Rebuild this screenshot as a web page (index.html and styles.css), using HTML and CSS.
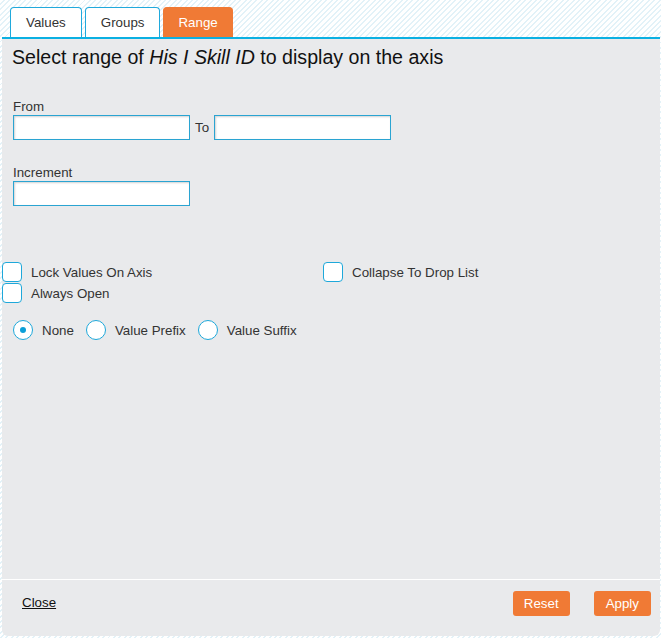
FILE: index.html
```html
<!DOCTYPE html>
<html>
<head>
<meta charset="utf-8">
<link rel="stylesheet" href="styles.css">
</head>
<body>
<div class="widget">
  <div class="tabs">
    <div class="tab">Values</div>
    <div class="tab">Groups</div>
    <div class="tab active">Range</div>
  </div>
  <div class="panel">
    <div class="content">
      <h1 class="title">Select range of <em>His I Skill ID</em> to display on the axis</h1>
      <div class="field from-field">
        <label class="label">From</label>
        <div class="range-row">
          <input class="text-input" type="text">
          <span class="to">To</span>
          <input class="text-input" type="text">
        </div>
      </div>
      <div class="field inc-field">
        <label class="label">Increment</label>
        <input class="text-input" type="text">
      </div>
      <div class="checks">
        <div class="check-col">
          <div class="check"><span class="box"></span><span class="check-text">Lock Values On Axis</span></div>
          <div class="check"><span class="box"></span><span class="check-text">Always Open</span></div>
        </div>
        <div class="check-col">
          <div class="check"><span class="box"></span><span class="check-text">Collapse To Drop List</span></div>
        </div>
      </div>
      <div class="radios">
        <div class="radio"><span class="circle checked"></span><span class="radio-text">None</span></div>
        <div class="radio"><span class="circle"></span><span class="radio-text">Value Prefix</span></div>
        <div class="radio"><span class="circle"></span><span class="radio-text">Value Suffix</span></div>
      </div>
    </div>
    <div class="footer">
      <a class="close-link" href="#">Close</a>
      <button class="btn reset">Reset</button>
      <button class="btn apply">Apply</button>
    </div>
  </div>
</div>
</body>
</html>
```

FILE: styles.css
```css
html, body {
  margin: 0;
  padding: 0;
}
body {
  font-family: "Liberation Sans", Arial, sans-serif;
  font-size: 13.33px;
  color: #333;
  width: 661px;
  height: 638px;
  overflow: hidden;
  background-color: #fff;
  background-image: repeating-linear-gradient(135deg, #fff 0px, #fff 2.4px, #e3f2f8 2.4px, #e3f2f8 3.8px);
}
.widget {
  padding-left: 2px;
  padding-right: 1px;
  display: flex;
  flex-direction: column;
}
.tabs {
  display: flex;
  gap: 3px;
  padding: 7px 0 0 8px;
  height: 30px;
}
.tab {
  box-sizing: border-box;
  height: 30px;
  line-height: 29px;
  padding: 0 15px;
  border: 1px solid #20a9dc;
  border-bottom: none;
  border-radius: 4px 4px 0 0;
  background: #fff;
  color: #333;
}
.tab.active {
  padding: 0 14px;
  background: #f07a35;
  border-color: #f07a35;
  color: #fff;
}
.panel {
  box-sizing: border-box;
  height: 599px;
  background: #e9eaec;
  border-top: 2px solid #0bb0e2;
  border-radius: 0 0 6px 6px;
  display: flex;
  flex-direction: column;
}
.content {
  flex: 1;
}
.title {
  margin: 0;
  padding: 6px 0 0 10px;
  font-size: 19.6px;
  line-height: 24px;
  font-weight: normal;
  color: #111;
}
.title em {
  font-style: italic;
}
.field {
  display: flex;
  flex-direction: column;
  align-items: flex-start;
  padding-left: 11px;
}
.from-field {
  margin-top: 30px;
}
.inc-field {
  margin-top: 25px;
}
.label {
  line-height: 15px;
  margin-bottom: 1px;
  color: #333;
}
.range-row {
  display: flex;
  align-items: center;
}
.to {
  margin: 0 5px 0 5px;
  color: #333;
}
.text-input {
  box-sizing: border-box;
  width: 177px;
  height: 25px;
  margin: 0;
  border: 1px solid #2aa4d2;
  background: #fff;
  box-shadow: inset 1px 1px 2px rgba(0, 0, 0, 0.18);
  padding: 0 4px;
  font-family: inherit;
  font-size: 13px;
  outline: none;
}
.checks {
  display: grid;
  grid-template-columns: 321px auto;
  margin-top: 56px;
}
.check-col {
  display: flex;
  flex-direction: column;
  gap: 1px;
}
.check {
  display: flex;
  align-items: center;
  height: 20px;
}
.box {
  box-sizing: border-box;
  width: 20px;
  height: 20px;
  border: 1px solid #1ea8da;
  border-radius: 4px;
  background: #fff;
  margin-right: 9px;
}
.check-text {
  line-height: 15px;
  color: #333;
}
.radios {
  display: flex;
  align-items: center;
  gap: 12px;
  padding-left: 11px;
  margin-top: 17px;
}
.radio {
  display: flex;
  align-items: center;
  height: 20px;
}
.circle {
  box-sizing: border-box;
  width: 20px;
  height: 20px;
  border: 1px solid #1ea8da;
  border-radius: 50%;
  background: #fff;
  margin-right: 9px;
  position: relative;
}
.circle.checked::after {
  content: "";
  position: absolute;
  left: 6px;
  top: 6px;
  width: 6px;
  height: 6px;
  border-radius: 50%;
  background: #0a9fd8;
}
.radio-text {
  line-height: 15px;
  color: #333;
}
.footer {
  box-sizing: border-box;
  height: 57px;
  border-top: 1px solid #fff;
  display: flex;
  align-items: flex-start;
  padding: 11px 9px 0 20px;
}
.close-link {
  color: #111;
  text-decoration: underline;
  line-height: 15px;
  margin-top: 4px;
}
.btn {
  height: 25px;
  padding: 0 12px;
  border: none;
  border-radius: 3px;
  background: #f07a35;
  color: #fff;
  font-family: inherit;
  font-size: 13.33px;
  line-height: 25px;
}
.reset {
  margin-left: auto;
  margin-right: 24px;
  padding: 0 11px;
}
```
